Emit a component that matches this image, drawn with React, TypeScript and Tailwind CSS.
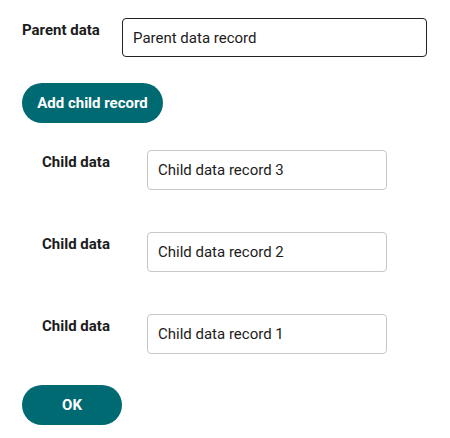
import React from "react";

function ChildRow({ value }: { value: string }) {
  return (
    <div className="flex items-start">
      <div className="w-[105px] pt-[1px] text-[15px] font-bold leading-[22px] text-[#1c1c1c]">Child data</div>
      <input
        readOnly
        value={value}
        className="h-[40px] w-[240px] rounded-[4px] border border-[#c3c9ca] bg-white px-[10px] text-[15px] text-[#1c1c1c] outline-none"
      />
    </div>
  );
}

export default function App() {
  return (
    <div className="min-h-[438px] w-[450px] bg-white font-['Roboto',sans-serif]">
      <div className="flex flex-col pl-[22px] pt-[18px]">
        <div className="flex items-start">
          <div className="w-[100px] pt-[1px] text-[15px] font-bold leading-[22px] text-[#1c1c1c]">Parent data</div>
          <input
            readOnly
            value="Parent data record"
            className="h-[39px] w-[305px] rounded-[4px] border border-[#222222] bg-white px-[10px] text-[15px] text-[#1c1c1c] outline-none"
          />
        </div>
        <button className="mt-[26px] flex h-[40px] w-[141px] items-center justify-center rounded-full bg-[#006a72] text-[15px] font-bold text-white">
          Add child record
        </button>
        <div className="mt-[27px] flex flex-col gap-[42px] pl-[20px]">
          <ChildRow value="Child data record 3" />
          <ChildRow value="Child data record 2" />
          <ChildRow value="Child data record 1" />
        </div>
        <button className="mt-[31px] flex h-[40px] w-[100px] items-center justify-center rounded-full bg-[#006a72] text-[15px] font-bold text-white">
          OK
        </button>
      </div>
    </div>
  );
}
